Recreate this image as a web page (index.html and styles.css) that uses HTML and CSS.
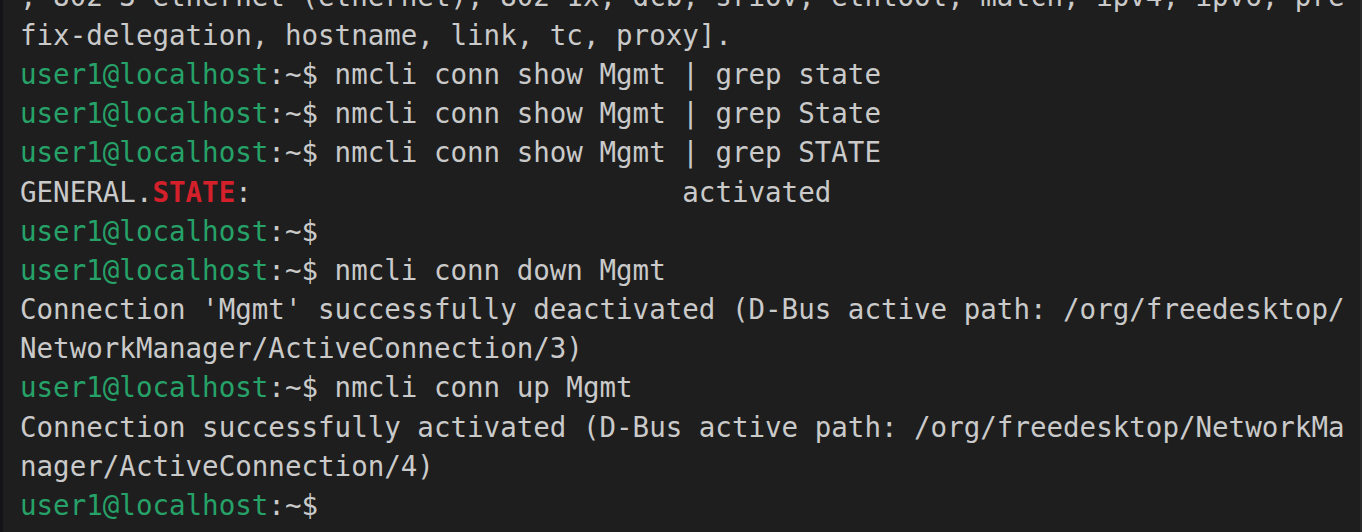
FILE: index.html
```html
<!DOCTYPE html>
<html lang="en">
<head>
<meta charset="utf-8">
<title>Terminal</title>
<link rel="stylesheet" href="styles.css">
</head>
<body>
<div class="window">
  <div class="term">
    <div class="line">, 802-3-ethernet (ethernet), 802-1x, dcb, sriov, ethtool, match, ipv4, ipv6, pre</div>
    <div class="line">fix-delegation, hostname, link, tc, proxy].</div>
    <div class="line"><span class="user">user1@localhost</span>:~$ nmcli conn show Mgmt | grep state</div>
    <div class="line"><span class="user">user1@localhost</span>:~$ nmcli conn show Mgmt | grep State</div>
    <div class="line"><span class="user">user1@localhost</span>:~$ nmcli conn show Mgmt | grep STATE</div>
    <div class="line">GENERAL.<span class="match">STATE</span>:                          activated</div>
    <div class="line"><span class="user">user1@localhost</span>:~$</div>
    <div class="line"><span class="user">user1@localhost</span>:~$ nmcli conn down Mgmt</div>
    <div class="line">Connection 'Mgmt' successfully deactivated (D-Bus active path: /org/freedesktop/</div>
    <div class="line">NetworkManager/ActiveConnection/3)</div>
    <div class="line"><span class="user">user1@localhost</span>:~$ nmcli conn up Mgmt</div>
    <div class="line">Connection successfully activated (D-Bus active path: /org/freedesktop/NetworkMa</div>
    <div class="line">nager/ActiveConnection/4)</div>
    <div class="line"><span class="user">user1@localhost</span>:~$</div>
  </div>
</div>
</body>
</html>
```

FILE: styles.css
```css
html, body {
  margin: 0;
  padding: 0;
  height: 100%;
  background: #1e1e1e;
  overflow: hidden;
}

.window {
  height: 100%;
  box-sizing: border-box;
  border-left: 3px solid #141417;
  border-right: 2px solid #2a2a2a;
  background: #1e1e1e;
  overflow: hidden;
}

.term {
  margin-top: -23.2px;
  padding-left: 17px;
  font-family: "DejaVu Sans Mono", monospace;
  font-size: 27.5px;
  line-height: 39.17px;
  color: #cacaca;
}

.line {
  white-space: pre;
  height: 39.17px;
}

.user {
  color: #26a269;
}

.match {
  color: #d3202b;
  font-weight: bold;
}
```
